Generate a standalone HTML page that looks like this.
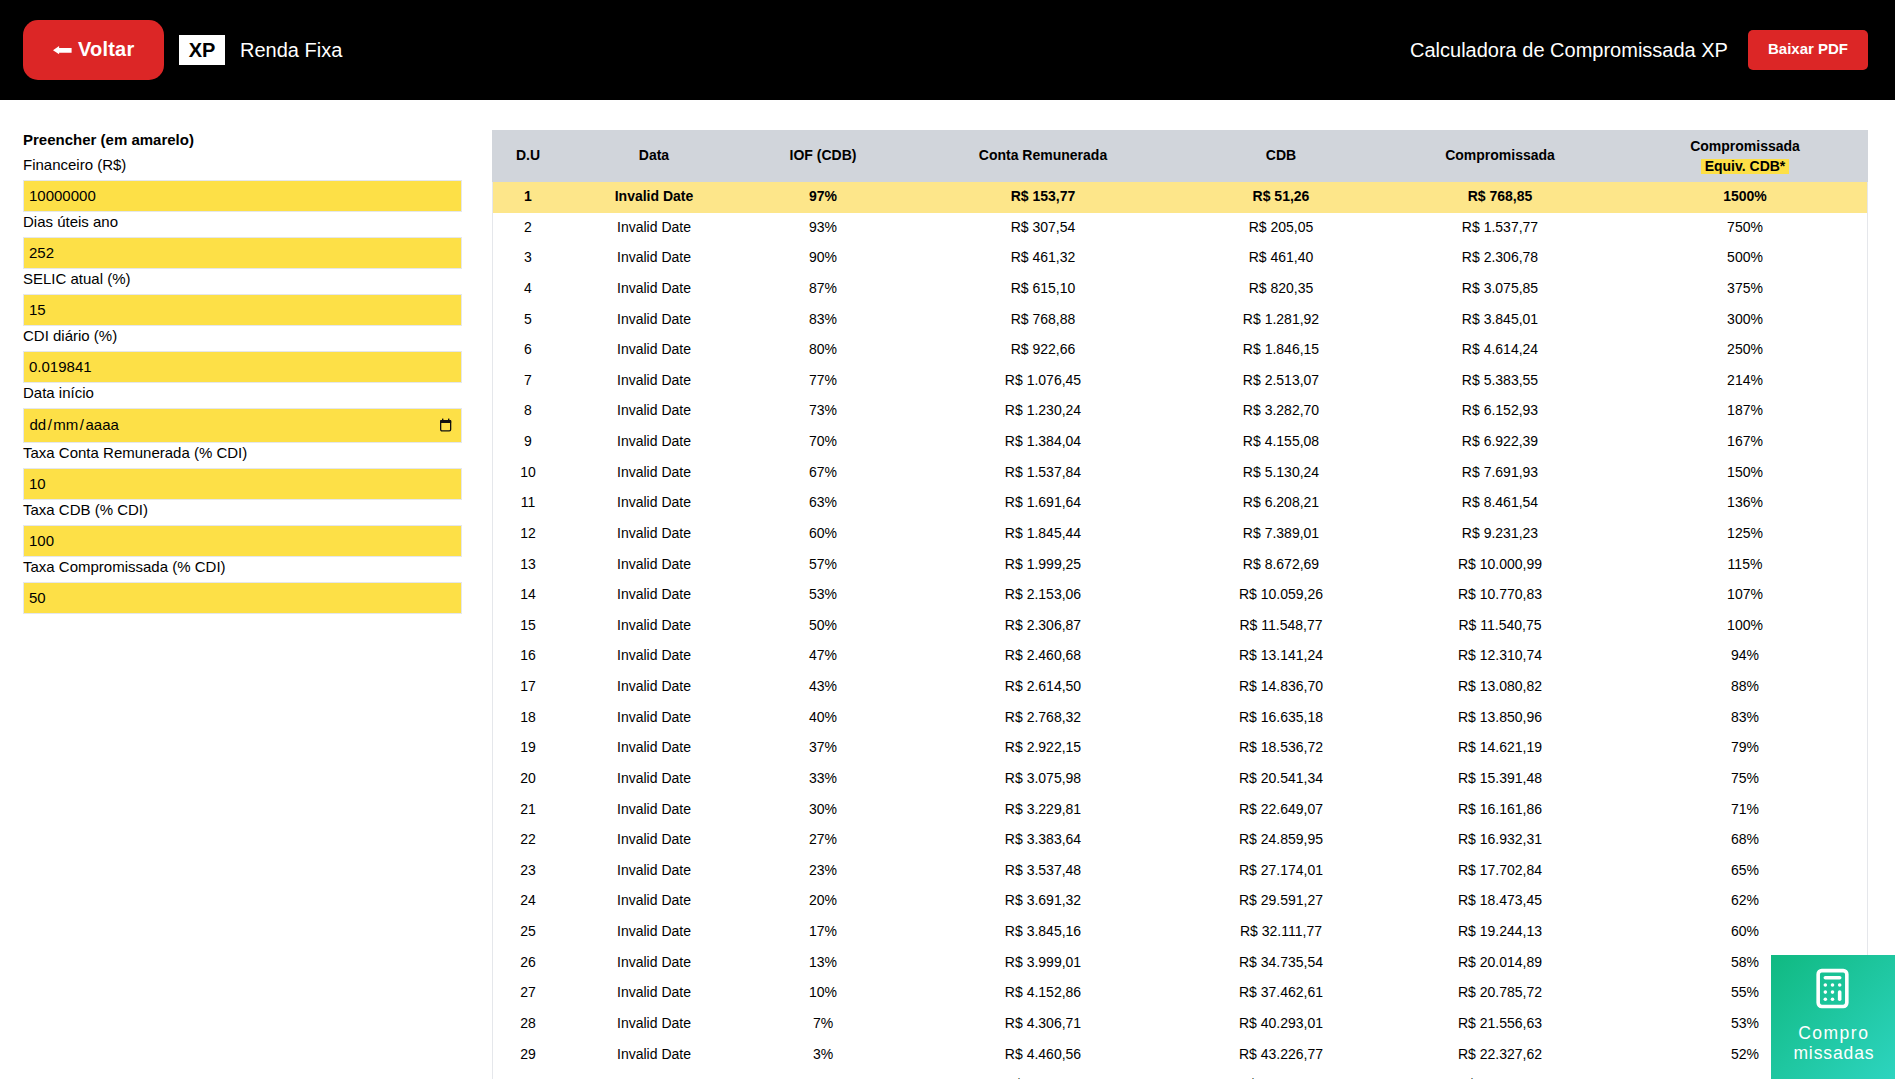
<!DOCTYPE html>
<html><head><meta charset="utf-8">
<style>
*{box-sizing:border-box;margin:0;padding:0}
html,body{width:1895px;height:1079px;overflow:hidden;background:#fff;font-family:"Liberation Sans",sans-serif;color:#000}
.hdr{position:absolute;left:0;top:0;width:1895px;height:100px;background:#000}
.back{position:absolute;left:23px;top:20px;width:141px;height:60px;background:#dc2626;border-radius:15px;color:#fff;font-weight:bold;font-size:20px;line-height:60px;text-align:center}
.xp{position:absolute;left:179px;top:35px;width:46px;height:30px;background:#fff;color:#000;font-weight:bold;font-size:20px;line-height:30px;text-align:center}
.rf{position:absolute;left:240px;top:35px;height:30px;line-height:30px;color:#fff;font-size:20px}
.title{position:absolute;left:1410px;top:35px;height:30px;line-height:30px;color:#fff;font-size:20px}
.pdf{position:absolute;left:1748px;top:30px;width:120px;height:40px;background:#dc2626;border-radius:5px;color:#fff;font-weight:bold;font-size:15px;line-height:38px;text-align:center}
.panel{position:absolute;left:23px;top:130px;width:439px;font-size:15px}
.panel h3{font-size:15px;font-weight:bold;line-height:20px;height:25px}
.lbl{display:block;line-height:20px;height:25px}
.inp{height:32px;border:1px solid #e5e7eb;background:#fde047;line-height:30px;padding-left:5px}
.inp.date{height:35px;line-height:31px;position:relative;padding-left:5.5px}
.tbl{position:absolute;left:492px;top:130px;width:1376px;border-left:1px solid #e5e7eb;border-right:1px solid #e5e7eb;height:1000px}
table{border-collapse:collapse;table-layout:fixed;width:1374px;font-size:14px}
thead th{background:#d1d5db;height:52px;font-weight:bold;text-align:center;vertical-align:top;line-height:20px;padding-top:15px}
thead th.c7{position:relative;padding-top:0}
.c7 .l1{position:absolute;left:0;top:6px;width:100%;line-height:20px}
.c7 .l2{position:absolute;left:0;top:29px;width:100%;text-align:center}
tbody tr{height:30.64px}
tbody td{text-align:center;vertical-align:top;padding:4px 0 0 0;line-height:20px}
tr.hl td{background:#fde68a;font-weight:bold}
.badge{display:block;width:fit-content;margin:0 auto;background:#fde047;padding:0 4px;height:15px;line-height:15px}
.fab{position:absolute;left:1771px;top:955px;width:124px;height:124px;background:linear-gradient(135deg,#10b981,#2dd4bf);color:#fff;text-align:center}
.fab svg{position:absolute;left:40.2px;top:12.3px}
.fab .t{position:absolute;left:0;top:67.8px;width:124px;font-size:17.5px;line-height:20px;letter-spacing:0.8px}
</style></head><body>
<div class="hdr">
  <div class="back"><svg style="position:absolute;left:0;top:0" width="141" height="60" viewBox="0 0 141 60"><path d="M30 30.3 L36.1 25.9 L36.1 28 L48.6 28 L48.6 32.7 L36.1 32.7 L36.1 34.3 Z" fill="#fff"/></svg><span style="position:absolute;left:55px;top:-1px;letter-spacing:0.2px">Voltar</span></div>
  <div class="xp">XP</div>
  <div class="rf">Renda Fixa</div>
  <div class="title">Calculadora de Compromissada XP</div>
  <div class="pdf">Baixar PDF</div>
</div>
<div class="panel">
  <h3>Preencher (em amarelo)</h3>
  <div class="lbl">Financeiro (R$)</div><div class="inp">10000000</div>
  <div class="lbl">Dias úteis ano</div><div class="inp">252</div>
  <div class="lbl">SELIC atual (%)</div><div class="inp">15</div>
  <div class="lbl">CDI diário (%)</div><div class="inp">0.019841</div>
  <div class="lbl">Data início</div><div class="inp date">dd<span style="margin:0 1.5px">/</span>mm<span style="margin:0 1.5px">/</span>aaaa<svg style="position:absolute;left:416px;top:9px" width="14" height="15" viewBox="0 0 14 15"><rect x="0.65" y="2.65" width="10" height="10.2" rx="1.3" fill="none" stroke="#111" stroke-width="1.3"/><rect x="0" y="2" width="11.3" height="3" rx="1" fill="#111"/><rect x="2" y="0.6" width="1.4" height="2" fill="#111"/><rect x="8" y="0.6" width="1.4" height="2" fill="#111"/></svg></div>
  <div class="lbl">Taxa Conta Remunerada (% CDI)</div><div class="inp">10</div>
  <div class="lbl">Taxa CDB (% CDI)</div><div class="inp">100</div>
  <div class="lbl">Taxa Compromissada (% CDI)</div><div class="inp">50</div>
</div>
<div class="tbl">
<table>
<colgroup><col style="width:70px"><col style="width:182px"><col style="width:156px"><col style="width:284px"><col style="width:192px"><col style="width:246px"><col style="width:244px"></colgroup>
<thead><tr><th>D.U</th><th>Data</th><th>IOF (CDB)</th><th>Conta Remunerada</th><th>CDB</th><th>Compromissada</th><th class="c7"><div class="l1">Compromissada</div><div class="l2"><span class="badge">Equiv. CDB*</span></div></th></tr></thead>
<tbody>
<tr class="hl"><td>1</td><td>Invalid Date</td><td>97%</td><td>R$ 153,77</td><td>R$ 51,26</td><td>R$ 768,85</td><td>1500%</td></tr>
<tr><td>2</td><td>Invalid Date</td><td>93%</td><td>R$ 307,54</td><td>R$ 205,05</td><td>R$ 1.537,77</td><td>750%</td></tr>
<tr><td>3</td><td>Invalid Date</td><td>90%</td><td>R$ 461,32</td><td>R$ 461,40</td><td>R$ 2.306,78</td><td>500%</td></tr>
<tr><td>4</td><td>Invalid Date</td><td>87%</td><td>R$ 615,10</td><td>R$ 820,35</td><td>R$ 3.075,85</td><td>375%</td></tr>
<tr><td>5</td><td>Invalid Date</td><td>83%</td><td>R$ 768,88</td><td>R$ 1.281,92</td><td>R$ 3.845,01</td><td>300%</td></tr>
<tr><td>6</td><td>Invalid Date</td><td>80%</td><td>R$ 922,66</td><td>R$ 1.846,15</td><td>R$ 4.614,24</td><td>250%</td></tr>
<tr><td>7</td><td>Invalid Date</td><td>77%</td><td>R$ 1.076,45</td><td>R$ 2.513,07</td><td>R$ 5.383,55</td><td>214%</td></tr>
<tr><td>8</td><td>Invalid Date</td><td>73%</td><td>R$ 1.230,24</td><td>R$ 3.282,70</td><td>R$ 6.152,93</td><td>187%</td></tr>
<tr><td>9</td><td>Invalid Date</td><td>70%</td><td>R$ 1.384,04</td><td>R$ 4.155,08</td><td>R$ 6.922,39</td><td>167%</td></tr>
<tr><td>10</td><td>Invalid Date</td><td>67%</td><td>R$ 1.537,84</td><td>R$ 5.130,24</td><td>R$ 7.691,93</td><td>150%</td></tr>
<tr><td>11</td><td>Invalid Date</td><td>63%</td><td>R$ 1.691,64</td><td>R$ 6.208,21</td><td>R$ 8.461,54</td><td>136%</td></tr>
<tr><td>12</td><td>Invalid Date</td><td>60%</td><td>R$ 1.845,44</td><td>R$ 7.389,01</td><td>R$ 9.231,23</td><td>125%</td></tr>
<tr><td>13</td><td>Invalid Date</td><td>57%</td><td>R$ 1.999,25</td><td>R$ 8.672,69</td><td>R$ 10.000,99</td><td>115%</td></tr>
<tr><td>14</td><td>Invalid Date</td><td>53%</td><td>R$ 2.153,06</td><td>R$ 10.059,26</td><td>R$ 10.770,83</td><td>107%</td></tr>
<tr><td>15</td><td>Invalid Date</td><td>50%</td><td>R$ 2.306,87</td><td>R$ 11.548,77</td><td>R$ 11.540,75</td><td>100%</td></tr>
<tr><td>16</td><td>Invalid Date</td><td>47%</td><td>R$ 2.460,68</td><td>R$ 13.141,24</td><td>R$ 12.310,74</td><td>94%</td></tr>
<tr><td>17</td><td>Invalid Date</td><td>43%</td><td>R$ 2.614,50</td><td>R$ 14.836,70</td><td>R$ 13.080,82</td><td>88%</td></tr>
<tr><td>18</td><td>Invalid Date</td><td>40%</td><td>R$ 2.768,32</td><td>R$ 16.635,18</td><td>R$ 13.850,96</td><td>83%</td></tr>
<tr><td>19</td><td>Invalid Date</td><td>37%</td><td>R$ 2.922,15</td><td>R$ 18.536,72</td><td>R$ 14.621,19</td><td>79%</td></tr>
<tr><td>20</td><td>Invalid Date</td><td>33%</td><td>R$ 3.075,98</td><td>R$ 20.541,34</td><td>R$ 15.391,48</td><td>75%</td></tr>
<tr><td>21</td><td>Invalid Date</td><td>30%</td><td>R$ 3.229,81</td><td>R$ 22.649,07</td><td>R$ 16.161,86</td><td>71%</td></tr>
<tr><td>22</td><td>Invalid Date</td><td>27%</td><td>R$ 3.383,64</td><td>R$ 24.859,95</td><td>R$ 16.932,31</td><td>68%</td></tr>
<tr><td>23</td><td>Invalid Date</td><td>23%</td><td>R$ 3.537,48</td><td>R$ 27.174,01</td><td>R$ 17.702,84</td><td>65%</td></tr>
<tr><td>24</td><td>Invalid Date</td><td>20%</td><td>R$ 3.691,32</td><td>R$ 29.591,27</td><td>R$ 18.473,45</td><td>62%</td></tr>
<tr><td>25</td><td>Invalid Date</td><td>17%</td><td>R$ 3.845,16</td><td>R$ 32.111,77</td><td>R$ 19.244,13</td><td>60%</td></tr>
<tr><td>26</td><td>Invalid Date</td><td>13%</td><td>R$ 3.999,01</td><td>R$ 34.735,54</td><td>R$ 20.014,89</td><td>58%</td></tr>
<tr><td>27</td><td>Invalid Date</td><td>10%</td><td>R$ 4.152,86</td><td>R$ 37.462,61</td><td>R$ 20.785,72</td><td>55%</td></tr>
<tr><td>28</td><td>Invalid Date</td><td>7%</td><td>R$ 4.306,71</td><td>R$ 40.293,01</td><td>R$ 21.556,63</td><td>53%</td></tr>
<tr><td>29</td><td>Invalid Date</td><td>3%</td><td>R$ 4.460,56</td><td>R$ 43.226,77</td><td>R$ 22.327,62</td><td>52%</td></tr>
<tr><td>30</td><td style="padding-top:5px">Invalid Date</td><td>0%</td><td>R$ 4.614,41</td><td>R$ 46.264,00</td><td>R$ 23.098,68</td><td>50%</td></tr>
</tbody></table>
</div>
<div style="position:absolute;left:492px;top:130px;width:1px;height:52px;background:#d1d5db"></div><div style="position:absolute;left:1867px;top:130px;width:1px;height:52px;background:#d1d5db"></div>
<div class="fab">
<svg width="43" height="43" viewBox="0 0 24 24" fill="none" stroke="#fff" stroke-width="2" stroke-linecap="round" stroke-linejoin="round"><rect width="16" height="20" x="4" y="2" rx="2"/><line x1="8" x2="16" y1="6" y2="6"/><line x1="16" x2="16" y1="14" y2="18"/><path d="M16 10h.01"/><path d="M12 10h.01"/><path d="M8 10h.01"/><path d="M12 14h.01"/><path d="M8 14h.01"/><path d="M12 18h.01"/><path d="M8 18h.01"/></svg>
<div class="t"><div style="letter-spacing:1.5px;padding-left:1.5px">Compro</div><div style="letter-spacing:0.9px;padding-left:1.9px">missadas</div></div>
</div>
</body></html>
